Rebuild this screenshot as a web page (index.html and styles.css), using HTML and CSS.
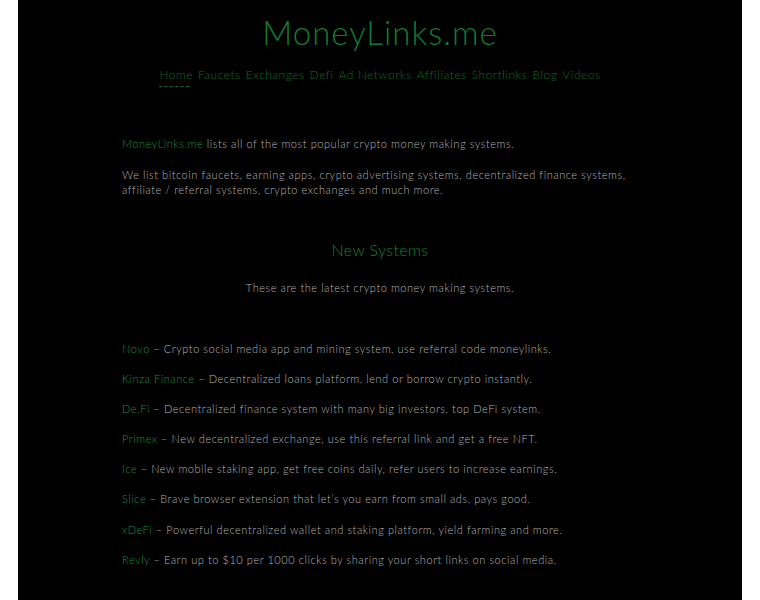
FILE: index.html
```html
<!DOCTYPE html>
<html>
<head>
<meta charset="utf-8">
<link rel="stylesheet" href="styles.css">
</head>
<body>
<div class="page">
  <header class="header">
    <h1 class="title">MoneyLinks.me</h1>
    <nav class="nav">
      <a class="nav-link active" href="#">Home</a>
      <a class="nav-link" href="#">Faucets</a>
      <a class="nav-link" href="#">Exchanges</a>
      <a class="nav-link" href="#">Defi</a>
      <a class="nav-link" href="#">Ad Networks</a>
      <a class="nav-link" href="#">Affiliates</a>
      <a class="nav-link" href="#">Shortlinks</a>
      <a class="nav-link" href="#">Blog</a>
      <a class="nav-link" href="#">Videos</a>
    </nav>
  </header>
  <main class="content">
    <p class="intro"><a class="link" href="#">MoneyLinks.me</a> lists all of the most popular crypto money making systems.</p>
    <p class="intro">We list bitcoin faucets, earning apps, crypto advertising systems, decentralized finance systems, affiliate / referral systems, crypto exchanges and much more.</p>
    <h2 class="section-title">New Systems</h2>
    <p class="section-sub">These are the latest crypto money making systems.</p>
    <ul class="systems">
      <li><a class="link" href="#">Novo</a> – Crypto social media app and mining system, use referral code moneylinks.</li>
      <li><a class="link" href="#">Kinza Finance</a> – Decentralized loans platform, lend or borrow crypto instantly.</li>
      <li><a class="link" href="#">De.Fi</a> – Decentralized finance system with many big investors, top DeFi system.</li>
      <li><a class="link" href="#">Primex</a> – New decentralized exchange, use this referral link and get a free NFT.</li>
      <li><a class="link" href="#">Ice</a> – New mobile staking app, get free coins daily, refer users to increase earnings.</li>
      <li><a class="link" href="#">Slice</a> – Brave browser extension that let’s you earn from small ads, pays good.</li>
      <li><a class="link" href="#">xDeFi</a> – Powerful decentralized wallet and staking platform, yield farming and more.</li>
      <li><a class="link" href="#">Revly</a> – Earn up to $10 per 1000 clicks by sharing your short links on social media.</li>
    </ul>
  </main>
</div>
</body>
</html>
```

FILE: styles.css
```css
html, body {
  margin: 0;
  padding: 0;
  background: #ffffff;
}
body {
  font-family: "Lato", "Noto Sans", sans-serif;
}
.page {
  width: 724px;
  margin: 0 auto;
  min-height: 600px;
  background: #000000;
}
.header {
  display: flex;
  flex-direction: column;
  align-items: center;
  padding-top: 12px;
}
.title {
  margin: 0;
  font-weight: 300;
  font-size: 33px;
  line-height: 40px;
  color: #137a33;
  letter-spacing: 1px;
}
.nav {
  margin-top: 15px;
  display: flex;
  gap: 5px;
  font-size: 12px;
  font-weight: 300;
  letter-spacing: 0.5px;
}
.nav-link {
  color: #0e6e2a;
  text-decoration: none;
  line-height: 16px;
}
.nav-link.active {
  position: relative;
}
.nav-link.active::after {
  content: "";
  position: absolute;
  left: 0;
  top: 19px;
  width: 30px;
  border-bottom: 1px dashed #0e6e2a;
}
.content {
  width: 516px;
  margin: 0 auto;
  padding-top: 53px;
  font-size: 11px;
  font-weight: 300;
  letter-spacing: 0.55px;
  color: #b4b4b4;
}
.link {
  color: #1a9040;
  text-decoration: none;
}
.intro {
  margin: 0 0 15px;
  line-height: 15.5px;
}
.section-title {
  margin: 42px 0 0;
  text-align: center;
  font-weight: 300;
  font-size: 16px;
  line-height: 20px;
  letter-spacing: 0.4px;
  color: #158036;
}
.section-sub {
  margin: 20px 0 0;
  text-align: center;
  line-height: 16px;
}
.systems {
  list-style: none;
  margin: 45px 0 0;
  padding: 0;
  display: flex;
  flex-direction: column;
  gap: 14.2px;
}
.systems li {
  line-height: 16px;
}
```
